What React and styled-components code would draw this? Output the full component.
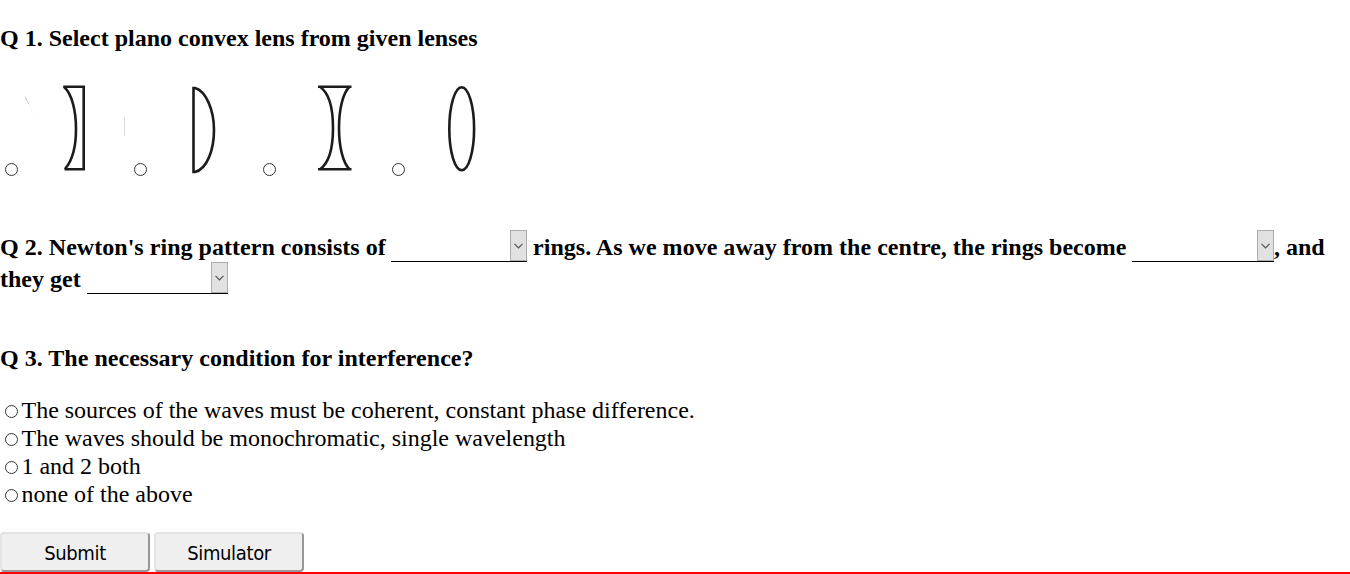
import React from "react";
import styled, { createGlobalStyle } from "styled-components";

const GlobalStyle = createGlobalStyle`
  body {
    margin: 0;
    background: #fff;
    color: #000;
    font-family: "Liberation Serif", "Times New Roman", serif;
    font-size: 24px;
    overflow: hidden;
  }
`;

const Page = styled.main`
  box-sizing: border-box;
  height: 574px;
  padding-top: 24px;
  border-bottom: 2px solid #f00;
  white-space: nowrap;
`;

const Question = styled.h2`
  margin: ${(p) => p.$margin || "0"};
  font-size: 24px;
  font-weight: bold;
  line-height: ${(p) => p.$line || 28}px;
  letter-spacing: ${(p) => p.$spacing || 0}px;
`;

const Radio = styled.input.attrs({ type: "radio" })`
  appearance: none;
  box-sizing: border-box;
  flex: none;
  width: 13px;
  height: 13px;
  margin: 0;
  border: 1px solid #333;
  border-radius: 50%;
  background: #fff;
  &:checked {
    background: radial-gradient(#333 0 3px, #fff 4px);
  }
`;

const LensRow = styled.div`
  display: flex;
  gap: 9px;
  height: 109px;
  margin-top: 24px;
  padding-left: 5px;
`;

const LensOption = styled.label`
  display: flex;
  align-items: flex-end;
  gap: 7px;
  width: 120px;
  height: 100px;
`;

const LensDrawing = styled.svg`
  flex: none;
  width: 100px;
  height: 100px;
  overflow: visible;
  fill: none;
  stroke: #1c1c1c;
  stroke-width: 2.6;
`;

const BlankLine = styled.span`
  display: inline-flex;
  justify-content: flex-end;
  box-sizing: border-box;
  width: ${(p) => p.$width}px;
  height: 32px;
  border-bottom: 1px solid #000;
`;

const DropButton = styled.button`
  display: flex;
  align-items: center;
  justify-content: center;
  box-sizing: border-box;
  width: 17px;
  height: 31px;
  padding: 0;
  border: 1px solid #adadad;
  background: #e1e1e1;
`;

const Sentence = styled.div`
  display: flex;
  height: 32px;
`;

const Phrase = styled.span`
  padding-top: 1px;
  width: ${(p) => (p.$width ? p.$width + "px" : "auto")};
  letter-spacing: ${(p) => p.$spacing || 0}px;
`;

const Answers = styled.div`
  margin-top: 24px;
`;

const Answer = styled.label`
  display: flex;
  align-items: center;
  gap: 3.5px;
  height: 28px;
  padding-left: 5px;
  line-height: 28px;

  input {
    margin-top: 2px;
  }
`;

const AnswerText = styled.span`
  letter-spacing: -0.01px;
`;

const Actions = styled.div`
  display: flex;
  gap: 4px;
  margin-top: 24px;
`;

const Action = styled.button`
  box-sizing: border-box;
  width: 150px;
  height: 40px;
  padding: 1px 0 0;
  border: 2px solid;
  border-color: #e3e3e3 #979797 #979797 #e3e3e3;
  border-radius: 4px;
  background: #efefef;
  color: #000;
  font-family: "DejaVu Sans Condensed", "DejaVu Sans", sans-serif;
  font-stretch: condensed;
  font-size: 20px;
  letter-spacing: -0.35px;
`;

function Blank({ width }) {
  return (
    <BlankLine $width={width}>
      <DropButton aria-label="Choose">
        <svg width="9" height="6" viewBox="0 0 9 6" fill="none" stroke="#555" strokeWidth="1.2">
          <path d="M.5.8 4.5 4.8 8.5.8" />
        </svg>
      </DropButton>
    </BlankLine>
  );
}

const lenses = [
  <>
    <path d="M38.2 10.8H58.7V93.2H39.5" />
    <path d="M39.2 11C47 18 51 35 51 53S47 85 40 93" />
    <path d="M.3 20.500Q1 24 4 28" stroke="#ccc" strokeWidth="1" />
    <path d="M4 28Q6 33 7.500 38" stroke="#f5f5f5" strokeWidth="1" />
    <path d="M99.5 41V60" stroke="#ddd" strokeWidth="1" />
  </>,
  <path d="M39.5 12V96H41C53 93 60 74 60 54S52 15 41 12Z" />,
  <>
    <path d="M35 10.8H68.5M35 93.2H68.5" />
    <path d="M37 10.8C46 17 50 33 50 52S46 87 37 93.2" />
    <path d="M66.5 10.8C60 17 56 33 56 52S60 87 66.5 93.2" />
  </>,
  <ellipse cx="49.7" cy="52.7" rx="12.4" ry="41.5" />,
];

const answers = [
  "The sources of the waves must be coherent, constant phase difference.",
  "The waves should be monochromatic, single wavelength",
  "1 and 2 both",
  "none of the above",
];

export default function App() {
  return (
    <>
      <GlobalStyle />
      <Page>
        <Question>Q 1. Select plano convex lens from given lenses</Question>
        <LensRow>
          {lenses.map((lens, i) => (
            <LensOption key={i}>
              <Radio name="lens" />
              <LensDrawing viewBox="0 0 100 100">{lens}</LensDrawing>
            </LensOption>
          ))}
        </LensRow>
        <Question as="section" $margin="45px 0 0" $line={32}>
          <Sentence>
            <Phrase $width={391} $spacing={0.03}>Q 2. Newton's ring pattern consists of</Phrase>
            <Blank width={136} />
            <Phrase $width={605} $spacing={0.02}>&nbsp;rings. As we move away from the centre, the rings become</Phrase>
            <Blank width={142} />
            <Phrase>, and</Phrase>
          </Sentence>
          <Sentence>
            <Phrase $width={87}>they get</Phrase>
            <Blank width={141} />
          </Sentence>
        </Question>
        <Question $margin="50px 0 0" $spacing={0.02}>Q 3. The necessary condition for interference?</Question>
        <Answers>
          {answers.map((text) => (
            <Answer key={text}>
              <Radio name="condition" />
              <AnswerText>{text}</AnswerText>
            </Answer>
          ))}
        </Answers>
        <Actions>
          <Action>Submit</Action>
          <Action>Simulator</Action>
        </Actions>
      </Page>
    </>
  );
}
